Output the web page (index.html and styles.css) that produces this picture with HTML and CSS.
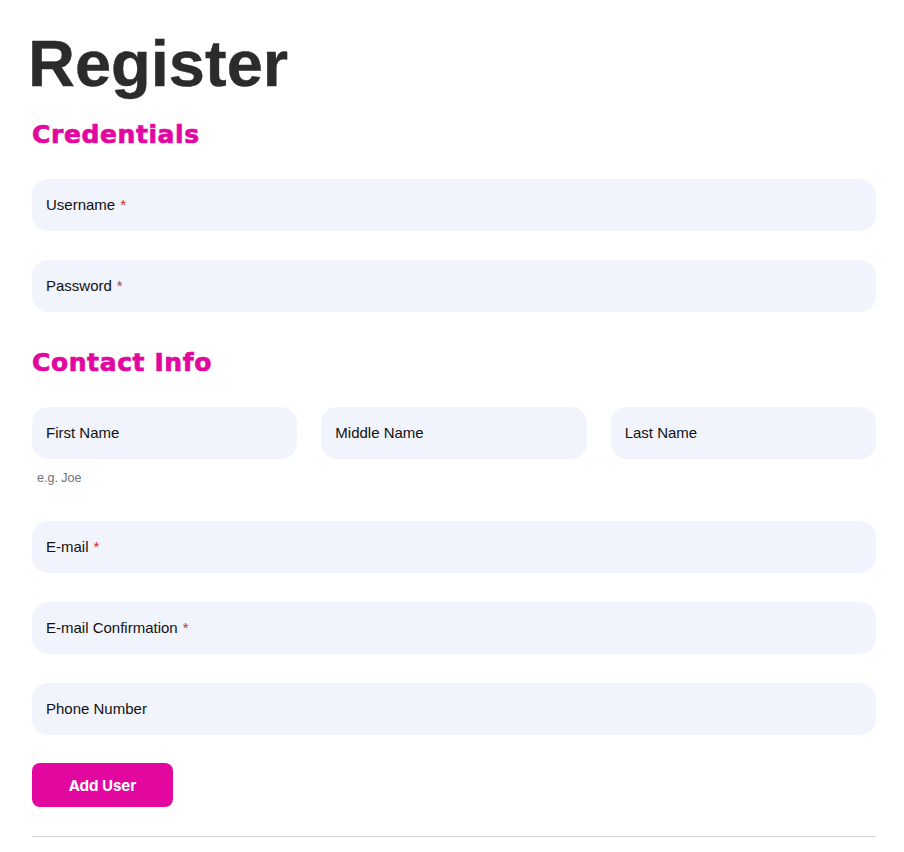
FILE: index.html
```html
<!DOCTYPE html>
<html lang="en">
<head>
<meta charset="utf-8">
<title>Register</title>
<link rel="stylesheet" href="styles.css">
</head>
<body>
<main class="page">
  <h1 class="title">Register</h1>
  <h2 class="section section-first">Credentials</h2>
  <div class="field">Username <span class="req">*</span></div>
  <div class="field">Password <span class="req">*</span></div>

  <h2 class="section">Contact Info</h2>
  <div class="row">
    <div class="col">
      <div class="field">First Name</div>
      <div class="hint">e.g. Joe</div>
    </div>
    <div class="col">
      <div class="field">Middle Name</div>
    </div>
    <div class="col">
      <div class="field">Last Name</div>
    </div>
  </div>
  <div class="field">E-mail <span class="req">*</span></div>
  <div class="field">E-mail Confirmation <span class="req">*</span></div>
  <div class="field field-last">Phone Number</div>
  <button class="btn" type="button">Add User</button>
  <hr class="rule">
</main>
</body>
</html>
```
FILE: styles.css
```css
html, body {
  margin: 0;
  padding: 0;
  background: #ffffff;
}
.page {
  padding: 28px 28px 0 32px;
  font-family: "Liberation Sans", Arial, sans-serif;
  color: #111111;
}
.title {
  margin: 0 0 0 -4px;
  font-size: 65px;
  line-height: 72px;
  font-weight: 700;
  color: #2b2b2b;
  -webkit-text-stroke: 0.4px #2b2b2b;
}
.section {
  margin: 36px 0 29px 0;
  font-family: "DejaVu Sans", sans-serif;
  font-size: 25px;
  line-height: 30px;
  font-weight: 700;
  letter-spacing: 0.6px;
  color: #e2079f;
  -webkit-text-stroke: 0.7px #e2079f;
}
.section-first {
  margin-top: 20px;
  margin-bottom: 29px;
}
.field {
  box-sizing: border-box;
  height: 52px;
  margin-bottom: 29px;
  padding: 0 14px 2px 14px;
  display: flex;
  align-items: center;
  gap: 5px;
  background: #f1f4fc;
  border-radius: 16px;
  font-size: 15px;
  color: #111111;
}
.field-last {
  margin-bottom: 28px;
}
.req {
  color: #d42a2a;
}
.row {
  display: grid;
  grid-template-columns: 1fr 1fr 1fr;
  gap: 24px;
  margin-bottom: 35px;
}
.row .field {
  margin-bottom: 0;
}
.hint {
  margin-top: 11px;
  padding-left: 5px;
  font-size: 12.5px;
  line-height: 16px;
  color: #6b7280;
}
.btn {
  display: block;
  width: 141px;
  height: 44px;
  border: none;
  border-radius: 8px;
  background: #e2079f;
  color: #ffffff;
  font-family: Inter, "Noto Sans", sans-serif;
  font-size: 15px;
  font-weight: 700;
  cursor: pointer;
}
.rule {
  margin: 29px 0 0 0;
  border: none;
  border-top: 1px solid #d1d5db;
}
```
